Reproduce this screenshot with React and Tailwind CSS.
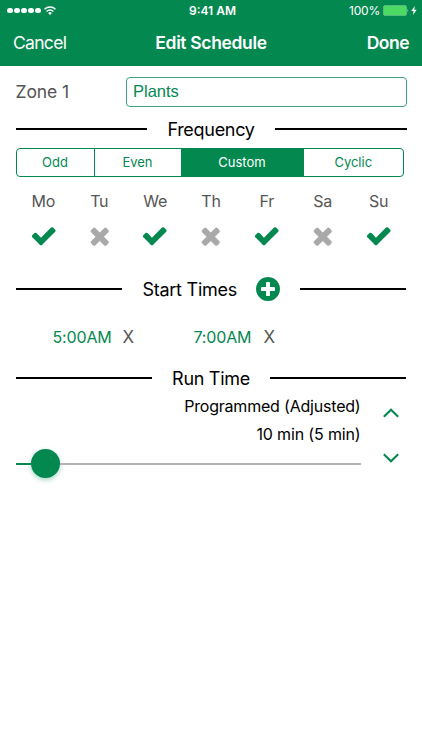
import { useState } from "react";

const days = [
  { name: "Mo", on: true },
  { name: "Tu", on: false },
  { name: "We", on: true },
  { name: "Th", on: false },
  { name: "Fr", on: true },
  { name: "Sa", on: false },
  { name: "Su", on: true },
];

const modes = [
  { name: "Odd", width: "w-[78px]" },
  { name: "Even", width: "w-[87px]" },
  { name: "Custom", width: "w-[122px]" },
  { name: "Cyclic", width: "flex-1" },
];

function CheckIcon() {
  return (
    <svg className="size-[27.5px] text-[#038850]" viewBox="0 0 1792 1792" fill="currentColor">
      <path d="M1671 566q0 40-28 68l-724 724-136 136q-28 28-68 28t-68-28l-136-136-362-362q-28-28-28-68t28-68l136-136q28-28 68-28t68 28l294 295 656-657q28-28 68-28t68 28l136 136q28 28 28 68z" />
    </svg>
  );
}

function CrossIcon() {
  return (
    <svg className="size-[27.5px] text-[#a9a9a9]" viewBox="0 0 1792 1792" fill="currentColor">
      <path d="M1490 1322q0 40-28 68l-136 136q-28 28-68 28t-68-28l-294-294-294 294q-28 28-68 28t-68-28l-136-136q-28-28-28-68t28-68l294-294-294-294q-28-28-28-68t28-68l136-136q28-28 68-28t68 28l294 294 294-294q28-28 68-28t68 28l136 136q28 28 28 68t-28 68l-294 294 294 294q28 28 28 68z" />
    </svg>
  );
}

function PlusCircle() {
  return (
    <svg className="size-7 text-[#038850]" viewBox="0 0 1792 1792" fill="currentColor">
      <path d="M1344 960v-128q0-26-19-45t-45-19h-256v-256q0-26-19-45t-45-19h-128q-26 0-45 19t-19 45v256h-256q-26 0-45 19t-19 45v128q0 26 19 45t45 19h256v256q0 26 19 45t45 19h128q26 0 45-19t19-45v-256h256q26 0 45-19t19-45zm320-64q0 209-103 385.5t-279.5 279.5-385.5 103-385.5-103-279.5-279.5-103-385.5 103-385.5 279.5-279.5 385.5-103 385.5 103 279.5 279.5 103 385.5z" />
    </svg>
  );
}

function Chevron({ down }) {
  return (
    <svg className="h-[10px] w-4 text-[#038850]" viewBox="0 0 16 10" fill="none" stroke="currentColor" strokeWidth="2.1">
      <path d={down ? "M0.8 1.2 8 8.2l7.2-7" : "M0.8 8.8 8 1.8l7.2 7"} />
    </svg>
  );
}

function Divider({ line, children }) {
  return (
    <div className="flex h-6 items-center justify-between text-[18px] tracking-[-0.3px]">
      <span className={`h-0.5 bg-black ${line}`} />
      {children}
      <span className={`h-0.5 bg-black ${line}`} />
    </div>
  );
}

function StatusBar() {
  return (
    <div className="grid h-[21px] grid-cols-3 items-center pl-[7px] pr-[5px] text-[12px]">
      <div className="flex items-center gap-[1.4px]">
        {[0, 1, 2, 3, 4].map((dot) => (
          <span key={dot} className="size-[5.7px] rounded-full bg-white" />
        ))}
        <svg className="ml-0.5 h-[9px] w-3" viewBox="0 0 12 9" fill="none" stroke="white" strokeWidth="1.4">
          <path d="M0.5 3.3a7.8 7.8 0 0 1 11 0" />
          <path d="M2.6 5.4a4.8 4.8 0 0 1 6.8 0" />
          <path d="M6 9 4.1 7a2.7 2.7 0 0 1 3.8 0z" fill="white" stroke="none" />
        </svg>
      </div>
      <span className="pl-px pt-px text-center text-[12px] font-semibold">9:41 AM</span>
      <div className="flex items-center justify-end">
        <span className="pt-px tracking-[-0.2px]">100%</span>
        <svg className="ml-[3px] h-[11px] w-[26px]" viewBox="0 0 26 11">
          <rect x="0.5" y="0.5" width="23" height="10" rx="1.5" fill="#4cd964" stroke="#6fc79a" strokeWidth="0.6" />
          <path d="M24.5 3.7q1.5 1.8 0 3.6z" fill="#a8e6b8" />
        </svg>
        <svg className="ml-[2px] h-[9px] w-[6px]" viewBox="0 0 6 9" fill="white">
          <path d="M3.8 0 0.3 5h2.3L1.9 9 5.7 3.7H3.3z" />
        </svg>
      </div>
    </div>
  );
}

export default function App() {
  const [mode, setMode] = useState("Custom");
  const [zoneName, setZoneName] = useState("Plants");
  const [times] = useState(["5:00AM", "7:00AM"]);

  return (
    <div className="h-[750px] w-[422px] overflow-hidden bg-white font-['Inter',sans-serif] text-black">
      {/* HEADER */}
      <header className="h-[65.5px] bg-[#038850] text-white">
        <StatusBar />
        <div className="flex h-[45px] items-center justify-between px-[13px] text-[17.5px]">
          <button className="w-[70px] text-left tracking-[-0.7px]">Cancel</button>
          <h1 className="font-semibold tracking-[-0.35px]">Edit Schedule</h1>
          <button className="w-[70px] text-right font-semibold tracking-[-0.5px]">Done</button>
        </div>
      </header>

      <main className="px-[15.5px] pt-[11px]">
        {/* ZONE */}
        <div className="flex h-[30.5px] items-center">
          <label className="w-[110px] text-[17.5px] tracking-[-0.1px] text-[#555]">Zone 1</label>
          <input
            className="h-full min-w-0 flex-1 rounded-[4px] border border-[#3fa27a] px-[6.5px] font-['Liberation_Sans',sans-serif] text-[16.5px] text-[#038850] outline-none"
            value={zoneName}
            onChange={(e) => setZoneName(e.target.value)}
          />
        </div>

        {/* FREQUENCY */}
        <div className="pt-[10px]">
          <Divider line="w-[131.5px]">
            <span>Frequency</span>
          </Divider>
        </div>
        <div className="mr-[2.5px] mt-[7px] flex h-[29px] overflow-hidden rounded-[4px] border border-[#038850] text-[13px]">
          {modes.map((m) => (
            <button
              key={m.name}
              onClick={() => setMode(m.name)}
              className={`border-r border-[#038850] last:border-r-0 ${m.width} ${
                mode === m.name ? "bg-[#038850] text-white" : "text-[#038850]"
              }`}
            >
              {m.name}
            </button>
          ))}
        </div>

        {/* DAYS */}
        <div className="mt-[12px] grid grid-cols-7">
          {days.map((day) => (
            <div key={day.name} className="flex flex-col items-center gap-[9px]">
              <span className="text-[16px] leading-6 tracking-[-0.2px] text-[#555]">{day.name}</span>
              {day.on ? <CheckIcon /> : <CrossIcon />}
            </div>
          ))}
        </div>

        {/* START TIMES */}
        <div className="pt-[27.5px]">
          <Divider line="w-[106px]">
            <div className="-mr-0.5 flex items-center gap-[16.5px] tracking-[-0.25px]">
              <span>Start Times</span>
              <PlusCircle />
            </div>
          </Divider>
        </div>
        <div className="mt-[25px] flex h-6 items-center pl-[37px] text-[16px] tracking-[-0.15px]">
          {times.map((time) => (
            <div key={time} className="flex w-[141px] items-baseline">
              <span className="w-[70px] text-[#038850]">{time}</span>
              <button className="text-[17px] text-[#555]">X</button>
            </div>
          ))}
        </div>

        {/* RUN TIME */}
        <div className="mt-[16px]">
          <Divider line="w-[136.5px]">
            <span>Run Time</span>
          </Divider>
        </div>
        <div className="flex justify-between">
          <div className="w-[345px] pt-[2px]">
            <p className="text-right text-[16px] leading-7 tracking-[-0.2px]">Programmed (Adjusted)</p>
            <p className="text-right text-[16px] leading-7 tracking-[-0.15px]">10 min (5 min)</p>
            <div className="flex h-[30px] items-center">
              <span className="mt-0.5 h-0.5 w-[15px] bg-[#038850]" />
              <span className="size-[29px] rounded-full bg-[#038850] shadow-[0_2px_5px_rgba(3,136,80,0.35)]" />
              <span className="mt-0.5 h-0.5 flex-1 bg-[#b3b3b3]" />
            </div>
          </div>
          <div className="flex w-[31px] flex-col items-center gap-[35px] pt-[17.5px]">
            <Chevron />
            <Chevron down />
          </div>
        </div>
      </main>
    </div>
  );
}
